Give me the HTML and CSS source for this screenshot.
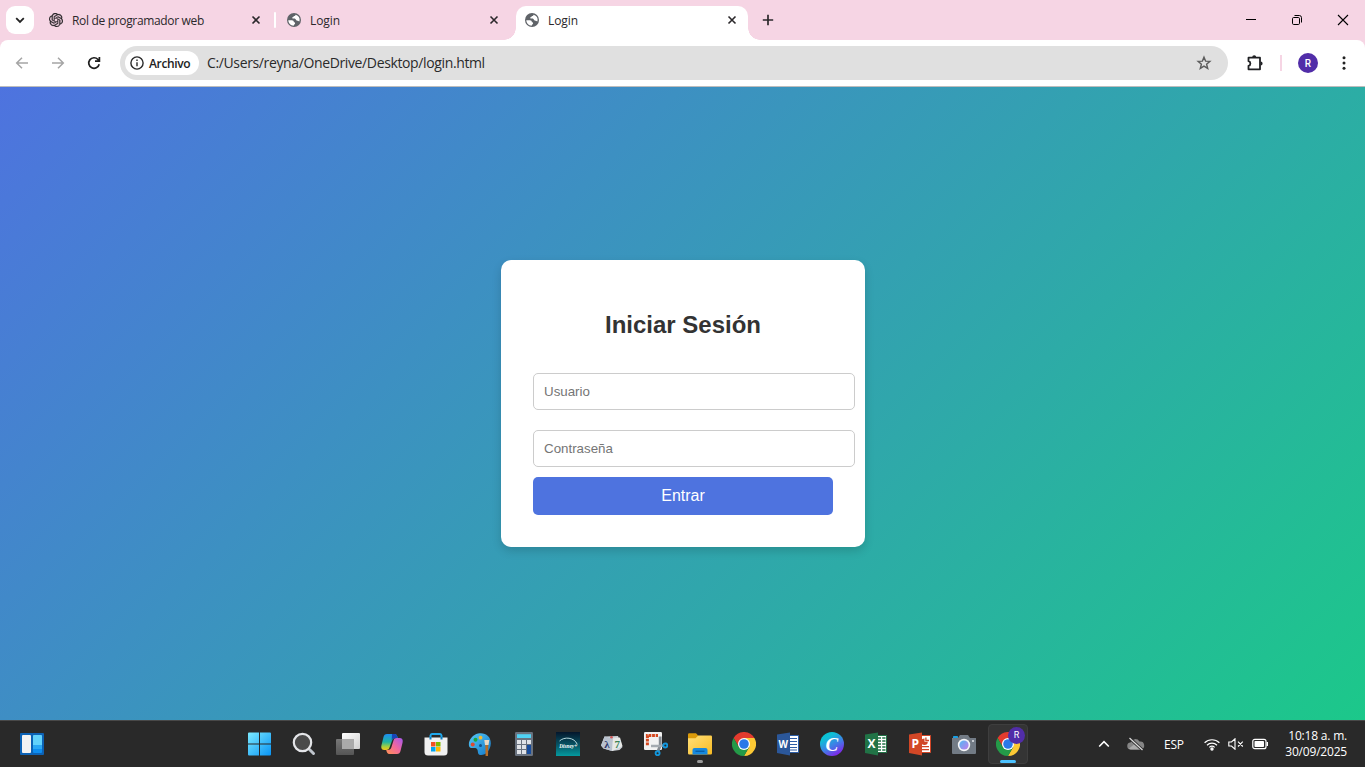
FILE: index.html
```html
<!DOCTYPE html>
<html lang="es">
<head>
<meta charset="utf-8">
<title>Login</title>
<link rel="stylesheet" href="styles.css">
</head>
<body>
<svg class="defs" width="0" height="0" aria-hidden="true">
  <defs>
    <symbol id="globe" viewBox="0 0 14 14">
      <circle cx="7" cy="7" r="7" fill="#5f6368"/>
      <path d="M1.3 7.3 4.8 7.3C6.3 7.3 6.9 8.1 6.9 9.2 8 9.2 8.3 9.9 8 10.8 7.7 11.6 6.8 11.5 6.7 12.8 3.7 12.6 1.4 10.3 1.3 7.3ZM8.6 1.7C8.4 2.7 7.7 3 6.8 2.9 6.7 3.7 6.2 4.1 5.3 4.2 5.1 5 5.4 5.6 6.4 5.5 8.2 5.4 8.9 6 9 7.1 9.8 7.8 11.2 7.8 12.3 8.6 13.4 5.4 11.7 2.5 8.6 1.7Z" fill="#fff"/>
    </symbol>
    <symbol id="close" viewBox="0 0 10 10"><path d="M1.5 1.5 8.5 8.5M8.5 1.5 1.5 8.5" stroke="#2b282b" stroke-width="1.6"/></symbol>
    <symbol id="chrome" viewBox="0 0 24 24">
      <path d="M1.6 6A12 12 0 0 1 22.4 6H12L6.8 15Z" fill="#e33b2e"/>
      <path d="M22.4 6A12 12 0 0 1 12 24L17.2 15 12 6Z" fill="#fcc934"/>
      <path d="M12 24A12 12 0 0 1 1.6 6L6.8 15H17.2Z" fill="#249a48"/>
      <circle cx="12" cy="12" r="6" fill="#fff"/><circle cx="12" cy="12" r="4.8" fill="#2b78e8"/>
    </symbol>
    <linearGradient id="gWin" x1="0" y1="0" x2="1" y2="1"><stop stop-color="#7ceaff"/><stop offset="1" stop-color="#0894f5"/></linearGradient>
    <linearGradient id="gWhite" x1="0" y1="0" x2="1" y2="1"><stop stop-color="#fff"/><stop offset="1" stop-color="#cfcfcf"/></linearGradient>
    <linearGradient id="gGrey" x1="0" y1="0" x2="0" y2="1"><stop stop-color="#777"/><stop offset="1" stop-color="#555"/></linearGradient>
    <linearGradient id="gCopA" x1="0" y1="0" x2="0" y2="1"><stop stop-color="#1d8df2"/><stop offset=".5" stop-color="#20b4a0"/><stop offset=".8" stop-color="#a9cf3b"/><stop offset="1" stop-color="#f5c518"/></linearGradient>
    <linearGradient id="gCopB" x1="1" y1="0" x2="0" y2="1"><stop stop-color="#a558f0"/><stop offset=".5" stop-color="#f2689c"/><stop offset="1" stop-color="#ff9350"/></linearGradient>
    <linearGradient id="gPal" x1="0" y1="0" x2="1" y2="1"><stop stop-color="#56c8f5"/><stop offset="1" stop-color="#1279cb"/></linearGradient>
    <linearGradient id="gDis" x1="0" y1="0" x2="0" y2="1"><stop stop-color="#04162c"/><stop offset=".55" stop-color="#075666"/><stop offset="1" stop-color="#049a9f"/></linearGradient>
    <linearGradient id="gFold" x1="0" y1="0" x2="1" y2="1"><stop stop-color="#ffe07a"/><stop offset="1" stop-color="#f8bb23"/></linearGradient>
    <linearGradient id="gCan" x1="0" y1="0" x2=".6" y2="1"><stop stop-color="#00c4cc"/><stop offset=".3" stop-color="#0fbfd6"/><stop offset=".65" stop-color="#3f7fe6"/><stop offset="1" stop-color="#7d2ae8"/></linearGradient>
    <linearGradient id="gLens" x1="0" y1="0" x2="1" y2="1"><stop stop-color="#4fb9f3"/><stop offset="1" stop-color="#c67bec"/></linearGradient>
  </defs>
</svg>

<header class="tabstrip">
  <button class="tab-search" aria-label="Buscar pestañas"><svg width="10" height="10" viewBox="0 0 10 10"><path d="M1.2 3.2 5 6.9 8.800 3.2" fill="none" stroke="#222" stroke-width="1.8"/></svg></button>
  <div class="tab tab-first">
    <svg width="14" height="14" viewBox="0 0 24 24"><path fill="#2b282b" stroke="#2b282b" stroke-width=".5" d="M22.2819 9.8211a5.9847 5.9847 0 0 0-.5157-4.9108 6.0462 6.0462 0 0 0-6.5098-2.9A6.0651 6.0651 0 0 0 4.9807 4.1818a5.9847 5.9847 0 0 0-3.9977 2.9 6.0462 6.0462 0 0 0 .7427 7.0966 5.98 5.98 0 0 0 .511 4.9107 6.051 6.051 0 0 0 6.5146 2.9001A5.9847 5.9847 0 0 0 13.2599 24a6.0557 6.0557 0 0 0 5.7718-4.2058 5.9894 5.9894 0 0 0 3.9977-2.9001 6.0557 6.0557 0 0 0-.7475-7.0729zm-9.022 12.6081a4.4755 4.4755 0 0 1-2.8764-1.0408l.1419-.0804 4.7783-2.7582a.7948.7948 0 0 0 .3927-.6813v-6.7369l2.02 1.1686a.071.071 0 0 1 .038.052v5.5826a4.504 4.504 0 0 1-4.4945 4.4944zm-9.6607-4.1254a4.4708 4.4708 0 0 1-.5346-3.0137l.142.0852 4.783 2.7582a.7712.7712 0 0 0 .7806 0l5.8428-3.3685v2.3324a.0804.0804 0 0 1-.0332.0615L9.74 19.9502a4.4992 4.4992 0 0 1-6.1408-1.6464zM2.3408 7.8956a4.485 4.485 0 0 1 2.3655-1.9728V11.6a.7664.7664 0 0 0 .3879.6765l5.8144 3.3543-2.0201 1.1685a.0757.0757 0 0 1-.071 0l-4.8303-2.7865A4.504 4.504 0 0 1 2.3408 7.872zm16.5963 3.8558L13.1038 8.364 15.1192 7.2a.0757.0757 0 0 1 .071 0l4.8303 2.7913a4.4944 4.4944 0 0 1-.6765 8.1042v-5.6772a.79.79 0 0 0-.407-.667zm2.0107-3.0231l-.142-.0852-4.7735-2.7818a.7759.7759 0 0 0-.7854 0L9.409 9.2297V6.8974a.0662.0662 0 0 1 .0284-.0615l4.8303-2.7866a4.4992 4.4992 0 0 1 6.6802 4.66zM8.3065 12.863l-2.02-1.1638a.0804.0804 0 0 1-.038-.0567V6.0742a4.4992 4.4992 0 0 1 7.3757-3.4537l-.142.0805L8.704 5.459a.7948.7948 0 0 0-.3927.6813zm1.0976-2.3654l2.602-1.4998 2.6069 1.4998v2.9994l-2.5974 1.4997-2.6067-1.4997Z"/></svg>
    <span class="tab-title">Rol de programador web</span>
    <svg class="tab-close" width="10" height="10"><use href="#close"/></svg>
  </div>
  <i class="tab-divider"></i>
  <div class="tab">
    <svg width="14" height="14"><use href="#globe"/></svg>
    <span class="tab-title">Login</span>
    <svg class="tab-close" width="10" height="10"><use href="#close"/></svg>
  </div>
  <div class="tab tab-active">
    <svg width="14" height="14"><use href="#globe"/></svg>
    <span class="tab-title">Login</span>
    <svg class="tab-close" width="10" height="10"><use href="#close"/></svg>
  </div>
  <svg class="new-tab" width="12" height="12" viewBox="0 0 12 12"><path d="M6 .8V11.2M.8 6H11.2" stroke="#2b282b" stroke-width="1.7"/></svg>
  <div class="window-controls">
    <svg width="12" height="12" viewBox="0 0 12 12"><path d="M1 5.5H11" stroke="#000"/></svg>
    <svg width="12" height="12" viewBox="0 0 12 12" fill="none" stroke="#000"><rect x="1.5" y="3.5" width="7" height="7" rx="1.2"/><path d="M3.5 1.5H8.3A2.2 2.2 0 0 1 10.5 3.7V8.5"/></svg>
    <svg width="12" height="12" viewBox="0 0 12 12"><path d="M1 1 11 11M11 1 1 11" stroke="#000" stroke-width="1.1"/></svg>
  </div>
</header>

<div class="toolbar-back">
<nav class="toolbar">
  <div class="nav-buttons">
    <svg width="14" height="14" viewBox="0 0 14 14" fill="none" stroke="#a5a5a5" stroke-width="1.5"><path d="M13 7H1.8M7 1.7 1.7 7 7 12.3"/></svg>
    <svg width="14" height="14" viewBox="0 0 14 14" fill="none" stroke="#a5a5a5" stroke-width="1.5"><path d="M1 7H12.2M7 1.7 12.3 7 7 12.3"/></svg>
    <svg width="14" height="14" viewBox="0 0 14 14" fill="none" stroke="#1f1f1f" stroke-width="1.7"><path d="M12.2 8.3A5.3 5.3 0 1 1 11 3.5L12 4.6M12.4 1V5.2H8"/></svg>
  </div>
  <div class="omnibox">
    <div class="chip">
      <svg width="14" height="14" viewBox="0 0 14 14"><circle cx="7" cy="7" r="6.1" fill="none" stroke="#2a2a2a" stroke-width="1.4"/><path d="M7 6.2V10.3M7 3.4V5" stroke="#2a2a2a" stroke-width="1.4"/></svg>
      <span>Archivo</span>
    </div>
    <span class="url">C:/Users/reyna/OneDrive/Desktop/login.html</span>
    <svg class="star" width="16" height="16" viewBox="0 0 16 16"><path d="M8 2.2 9.6 6.1 13.9 6.4 10.6 9.2 11.7 13.4 8 11.1 4.3 13.4 5.4 9.2 2.1 6.4 6.4 6.100Z" fill="none" stroke="#5c5c5c" stroke-width="1.4"/></svg>
  </div>
  <svg class="puzzle" width="18" height="18" viewBox="0 0 18 18"><path d="M2.500 3.700H14V15.300H2.500V11.800C5 11.300 5 7.700 2.500 7.200Z" fill="none" stroke="#202124" stroke-width="1.800" stroke-linejoin="round"/><path d="M6.200 3.200a2 2 0 0 1 4 0ZM14.600 7.500a2 2 0 0 1 0 4Z" fill="#202124"/></svg>
  <i class="toolbar-divider"></i>
  <span class="avatar">R</span>
  <svg class="menu" width="4" height="16" viewBox="0 0 4 16" fill="#222"><circle cx="2" cy="2.700" r="1.500"/><circle cx="2" cy="8" r="1.500"/><circle cx="2" cy="13.300" r="1.500"/></svg>
</nav>
</div>

<main class="page">
  <form class="login">
    <h2>Iniciar Sesión</h2>
    <input type="text" placeholder="Usuario">
    <input type="password" placeholder="Contraseña">
    <button type="button">Entrar</button>
  </form>
</main>

<footer class="taskbar">
  <div class="widgets"><svg width="24" height="22" viewBox="0 0 24 22"><rect width="24" height="22" rx="1" fill="#0c62b5"/><rect x="2" y="2" width="9" height="18" rx="1" fill="#f3f3f3"/><rect x="13" y="2" width="9" height="18" rx="1" fill="#0d8df0"/><path d="M13 12H22V3a1 1 0 0 0-1-1H14a1 1 0 0 0-1 1Z" fill="#62d2fb"/><path d="M13 12H22V16H13Z" fill="#2aa8f5"/></svg></div>
  <div class="apps">
    <span class="app"><svg viewBox="0 0 24 24"><path fill="url(#gWin)" d="M0 1.500a1 1 0 0 1 1-1H11V11.500H0ZM12 .5H22a1 1 0 0 1 1 1V11.500H12ZM0 12.500H11V23.500H1a1 1 0 0 1-1-1ZM12 12.500H23V22.500a1 1 0 0 1-1 1H12Z"/></svg></span>
    <span class="app"><svg viewBox="0 0 24 24"><path d="M17.500 17.500 21.500 21.500" stroke="#bfc5cc" stroke-width="3" stroke-linecap="round"/><circle cx="10.500" cy="10.500" r="8.700" fill="#4a4a4a" stroke="#e4e5e8" stroke-width="2.200"/></svg></span>
    <span class="app"><svg viewBox="0 0 24 24"><rect y="7" width="18" height="16" rx="1" fill="url(#gGrey)"/><rect x="6" y="1" width="18" height="16" rx="1" fill="url(#gWhite)"/><path d="M6 7H18V17H6Z" fill="#aaa"/></svg></span>
    <span class="app"><svg viewBox="0 0 24 24"><path d="M7 2H14.500C16.800 2 17.200 4 17.800 6H15C13.300 6 12.600 7 12.100 8.500L9.500 15.500C8.900 17.300 8 18 6.300 18H4.500C1.700 18 .8 16 1.400 13.500L3.500 5C4 3 5 2 7 2Z" fill="url(#gCopA)"/><path d="M12 2H14.500C16.800 2 17.200 4 17.800 6.300H14.300C12.500 6.300 12.300 7.500 11.700 8.500Z" fill="#1744b8"/><path d="M17 22H9.500C7.200 22 6.800 20 6.200 18H8C10 18 10.800 17 11.300 15.500L13.500 8.500C14.100 6.700 15 6 16.700 6H19.500C22.300 6 23.200 8 22.600 10.500L20.500 19C20 21 19 22 17 22Z" fill="url(#gCopB)"/></svg></span>
    <span class="app"><svg viewBox="0 0 24 24"><path d="M6.500 7V3.500A1.700 1.700 0 0 1 8 2H16A1.700 1.700 0 0 1 17.500 3.500V7" fill="none" stroke="#20a8ec" stroke-width="2"/><path d="M.5 5.500H23.500V20a3.500 3.500 0 0 1-3.500 3.500H4A3.500 3.500 0 0 1 .5 20Z" fill="#f1f1f1"/><path d="M5.500 5H7.500V7.500H5.500ZM16.500 5H18.500V7.500H16.500Z" fill="#0d7dc0"/><path fill="#f25022" d="M7 10h4.500v4.500H7Z"/><path fill="#7fba00" d="M12 10H16.500v4.500H12Z"/><path fill="#00a4ef" d="M7 15h4.500V19.500H7Z"/><path fill="#ffb900" d="M12 15H16.500V19.500H12Z"/></svg></span>
    <span class="app"><svg viewBox="0 0 24 24"><path d="M10 1.500C17 0 23 4 22.800 11.500 22.500 18.500 17.500 23.500 12.500 23 8.500 22.500 11 18.500 8.500 16.500 6.300 15 2.500 17.500 1.200 14.500-.5 9 4.500 2.800 10 1.500Z" fill="url(#gPal)"/><circle cx="12.500" cy="5.700" r="1.900" fill="#f3ba30"/><circle cx="7.500" cy="7.700" r="2" fill="#1aa640"/><circle cx="4.700" cy="12.500" r="2" fill="#dc4a31"/><circle cx="12.500" cy="13.500" r="1.500" fill="#154f88"/><path d="M17.300 12.500H20.300L20 24H17.600Z" fill="#b76e29"/><path d="M16.300 8H21.300L20.500 13H17Z" fill="#ead9c4"/></svg></span>
    <span class="app"><svg viewBox="0 0 24 24"><rect x="3" y="0" width="18" height="24" rx="1.200" fill="#69727f"/><path d="M5 2.200H19V6H5Z" fill="#50d2f5"/><path d="M5 8h4v4H5ZM10 8h4v4H10ZM15 8h4v4h-4ZM5 13h4v4H5ZM10 13h4v4H10ZM5 18h4v4H5ZM10 18h4v4H10Z" fill="#dfe2e7"/><path d="M15 13h4v9h-4Z" fill="#174c9c"/></svg></span>
    <span class="app"><svg viewBox="0 0 24 24"><rect width="24" height="24" fill="url(#gDis)"/><path d="M3.500 9C8 4.500 18.500 5 21.300 12.500" fill="none" stroke="#c9e9ee" stroke-width=".9"/><text x="3.200" y="16.300" class="disney" textLength="18" lengthAdjust="spacingAndGlyphs">Disney+</text></svg></span>
    <span class="app"><svg viewBox="0 0 24 24"><path d="M4.500 4.500 18 4 22.500 15 19.500 18 12 19 3.500 16.500 1 13.500Z" fill="#cfd4da"/><path d="M4.500 4.500 13 6.500 12 19 3.500 16.500 1 13.500Z" fill="#b9c2ce"/><path d="M13 6.500 20 5.500 22.500 14 12 19Z" fill="#e7e9e7"/><circle cx="11.500" cy="5.200" r="1.300" fill="#cf5757"/><text x="4.200" y="15.800" class="cube lambda">λ</text><text x="14.500" y="15.500" class="cube seven">7</text></svg></span>
    <span class="app"><svg viewBox="0 0 24 24"><rect width="18" height="18" rx="1.200" fill="#f2f2f2"/><path d="M3.400 13.200V3.500H14" fill="none" stroke="#d5481f" stroke-width="3" stroke-dasharray="2.800 .8"/><path d="M16.200 4.500V13.500L13.700 20" fill="none" stroke="#858b92" stroke-width="2.800"/><path d="M7 14H15.500L20 13.500" fill="none" stroke="#a4aab0" stroke-width="2.600"/><circle cx="13.600" cy="21.200" r="2" fill="none" stroke="#1296dd" stroke-width="1.900"/><circle cx="21.300" cy="13.500" r="2" fill="none" stroke="#1296dd" stroke-width="1.900"/></svg></span>
    <span class="app app-open"><svg viewBox="0 0 24 24"><path d="M0 2.500a1.200 1.200 0 0 1 1.200-1.200H8L10.500 4 9 8H0Z" fill="#dc9b0a"/><path d="M0 6.200H7.500L10.300 3.500H22.800A1.200 1.200 0 0 1 24 4.700V21.300a1.200 1.200 0 0 1-1.200 1.200H1.200A1.200 1.200 0 0 1 0 21.300Z" fill="url(#gFold)"/><path d="M4.500 22.500V18a2 2 0 0 1 2-2H17.500a2 2 0 0 1 2 2V22.500Z" fill="#1688dd"/><path d="M7.500 19.300H16.500" stroke="#075fa8" stroke-width="1.400"/></svg></span>
    <span class="app"><svg><use href="#chrome"/></svg></span>
    <span class="app"><svg viewBox="0 0 24 24"><path d="M12 3.500H22.500V20.500H12Z" fill="#fff" stroke="#2d5da6" stroke-width="1"/><path d="M13 6.500H21M13 9.500H21M13 12.500H21M13 15.500H21M13 18H21" stroke="#2d5da6" stroke-width="1.100"/><path d="M1 2.500 14 .5V23.500L1 21Z" fill="#2b579a"/><text x="2.500" y="16" class="office" textLength="9.500" lengthAdjust="spacingAndGlyphs">W</text></svg></span>
    <span class="app"><svg viewBox="0 0 24 24"><circle cx="12" cy="12" r="12" fill="url(#gCan)"/><text x="11.800" y="18.500" class="canva">C</text></svg></span>
    <span class="app"><svg viewBox="0 0 24 24"><path d="M12 3.500H22.500V20.500H12Z" fill="#fff" stroke="#217346" stroke-width="1"/><path d="M13 6H17M18.200 6H21.500M13 9H17M18.200 9H21.500M13 12H17M18.200 12H21.500M13 15H17M18.200 15H21.500M13 18H17M18.200 18H21.500" stroke="#217346" stroke-width="1.400"/><path d="M1 2.500 14 .5V23.500L1 21Z" fill="#217346"/><text x="3.400" y="16.400" class="office office-lg">X</text></svg></span>
    <span class="app"><svg viewBox="0 0 24 24"><path d="M12 3.500H22.500V20.500H12Z" fill="#fff" stroke="#d04526" stroke-width="1"/><path d="M16.500 6.500A3.300 3.300 0 1 0 19.800 9.800H16.500Z" fill="#d04526"/><path d="M17.900 5.500V8.500H21M14 14.700H21M14 17.700H21" fill="none" stroke="#d04526" stroke-width="1.300"/><path d="M1 2.500 14 .5V23.500L1 21Z" fill="#d24726"/><text x="3.600" y="16.400" class="office office-lg">P</text></svg></span>
    <span class="app"><svg viewBox="0 0 24 24"><path d="M1.500 6V4.500H5.500V6" fill="#1aa0e4" stroke="#1aa0e4"/><path d="M0 6H6L8 3H16L18 6H24V21a1 1 0 0 1-1 1H1a1 1 0 0 1-1-1Z" fill="#727b85"/><circle cx="12" cy="13" r="6.200" fill="#f5f6f8"/><circle cx="12" cy="13" r="4.600" fill="url(#gLens)"/><path d="M20 8h2v2h-2Z" fill="#c8cdd2"/></svg></span>
    <span class="app app-active"><svg><use href="#chrome"/></svg><b class="app-badge">R</b></span>
  </div>
  <div class="tray">
    <svg class="tray-up" width="12" height="12" viewBox="0 0 12 12"><path d="M1.200 8.500 6 3.700 10.800 8.500" fill="none" stroke="#fff" stroke-width="1.600"/></svg>
    <svg class="tray-cloud" width="18" height="14" viewBox="0 0 18 14"><path d="M4 12.500A3.500 3.500 0 0 1 3.500 5.500 5 5 0 0 1 12.500 4.500 4 4 0 0 1 13.800 12.500Z" fill="#858585"/><path d="M2 11.500 7 7.500 15.500 12Q15 12.500 13.800 12.500H4Q2.500 12.500 2 11.500Z" fill="#ababab"/><path d="M2.500 1 15.500 13" stroke="#292929" stroke-width="3"/><path d="M2.500 1 15.500 13" stroke="#ddd" stroke-width="1.200"/></svg>
    <span class="lang">ESP</span>
    <div class="status">
      <svg width="16" height="13" viewBox="0 0 16 13" fill="none" stroke="#fff" stroke-width="1.200"><path d="M.6 4.800A10.500 10.500 0 0 1 15.400 4.800M3 7.200A7.200 7.200 0 0 1 13 7.200M5.300 9.400A4 4 0 0 1 10.700 9.400"/><circle cx="8" cy="11" r="1.100" fill="#fff"/></svg>
      <svg width="16" height="12" viewBox="0 0 16 12" fill="none" stroke="#fff" stroke-width="1.100"><path d="M.8 4V8H3.500L7 11.200V.8L3.500 4ZM10 3.700 14.800 8.500M14.800 3.700 10 8.500"/></svg>
      <svg width="17" height="12" viewBox="0 0 17 12"><rect x=".8" y="1.300" width="13.200" height="9.400" rx="2" fill="none" stroke="#fff" stroke-width="1.200"/><rect x="2.500" y="3" width="9.500" height="6" rx=".8" fill="#fff"/><path d="M15.300 4V8" stroke="#fff" stroke-width="1.400"/></svg>
    </div>
    <div class="clock"><span class="time">10:18 a. m.</span><span class="date">30/09/2025</span></div>
  </div>
</footer>
</body>
</html>
```
FILE: styles.css
```css
* { box-sizing: border-box; }
body {
  margin: 0;
  width: 1365px;
  height: 767px;
  overflow: hidden;
  display: flex;
  flex-direction: column;
  font-family: "Open Sans", "Noto Sans", sans-serif;
}
svg { display: block; flex: none; }
.defs { position: absolute; }

/* Browser tabs */
.tabstrip {
  height: 40px;
  flex: none;
  display: flex;
  align-items: center;
  background: #f6d5e4;
  padding-left: 6px;
}
.tab-search {
  width: 28px;
  height: 28px;
  border: 0;
  padding: 0;
  border-radius: 9px;
  background: #fff;
  display: grid;
  place-items: center;
}
.tab {
  display: flex;
  align-items: center;
  gap: 9px;
  padding-bottom: 6px;
  height: 34px;
  align-self: flex-end;
}
.tab-first { width: 240px; padding-left: 15px; padding-right: 13px; }
.tab-divider { width: 2px; height: 16px; background: #fff; border-radius: 1px; }
.tab-divider + .tab { width: 240px; padding-left: 11px; padding-right: 17px; }
.tab-title {
  flex: 1;
  padding-top: 2px;
  font-size: 12px;
  color: #2b282b;
  letter-spacing: -0.33px;
  white-space: nowrap;
  line-height: 16px;
}
.tab-active {
  position: relative;
  width: 232px;
  padding: 0 11px 6px 9px;
  background: #fff;
  border-radius: 10px 10px 0 0;
}
.tab:not(.tab-first) .tab-title { letter-spacing: -0.1px; }
.tab-active::before,
.tab-active::after {
  content: "";
  position: absolute;
  bottom: 0;
  width: 12px;
  height: 12px;
}
.tab-active::before { left: -12px; background: radial-gradient(circle at 0 0, #f6d5e4 11.5px, #fff 12px); }
.tab-active::after { right: -12px; background: radial-gradient(circle at 100% 0, #f6d5e4 11.5px, #fff 12px); }
.new-tab { margin-left: 14px; }
.window-controls { margin: 0 16px 0 auto; display: flex; gap: 34px; }

/* Address bar */
.toolbar-back { background: #f6d5e4; flex: none; }
.toolbar {
  height: 47px;
  display: flex;
  align-items: center;
  background: #fff;
  border-bottom: 1px solid #bdbdbd;
  border-radius: 8px 8px 0 0;
  padding-left: 15px;
}
.nav-buttons { display: flex; gap: 22px; width: 105px; }
.omnibox {
  width: 1108px;
  height: 34px;
  border-radius: 17px;
  background: #e0e0e0;
  display: flex;
  align-items: center;
  padding: 0 16px 0 5px;
}
.chip {
  width: 74px;
  height: 24px;
  border-radius: 12px;
  background: #fff;
  display: flex;
  align-items: center;
  gap: 5px;
  padding-left: 5px;
  font-size: 12px;
  font-weight: 600;
  letter-spacing: -0.35px;
  color: #222;
}
.url {
  margin-left: 8px;
  padding-bottom: 1px;
  font-size: 14px;
  letter-spacing: -0.37px;
  color: #2a2a2a;
  white-space: nowrap;
}
.star { margin-left: auto; }
.puzzle { margin-left: 18px; }
.toolbar-divider { width: 2px; height: 16px; background: #f6d5e4; margin-left: 16px; }
.avatar {
  width: 20px;
  height: 20px;
  border-radius: 50%;
  background: #512da8;
  color: #fff;
  font: 500 10px/21px Roboto, sans-serif;
  text-align: center;
  margin-left: 16px;
}
.menu { margin-left: 24px; }

/* Login page */
.page {
  height: 633px;
  flex: none;
  display: flex;
  justify-content: center;
  align-items: center;
  background: linear-gradient(135deg, #4e73df, #1cc88a);
  font-family: Arial, "Liberation Sans", sans-serif;
}
.login {
  width: 364px;
  padding: 32px;
  margin-left: 1px;
  border-radius: 10px;
  background: #fff;
  box-shadow: 0 4px 10px rgba(0, 0, 0, 0.15);
  text-align: center;
}
.login h2 { margin: 19px 0 35px; font-size: 24px; line-height: 27px; color: #333; }
.login input {
  display: block;
  width: 322px;
  height: 37px;
  margin: 0 0 20px;
  padding: 10px;
  border: 1px solid #ccc;
  border-radius: 5px;
  font: 13.333px Arial, "Liberation Sans", sans-serif;
}
.login input::placeholder { color: #757575; }
.login button {
  display: block;
  width: 300px;
  height: 38px;
  margin-top: -10px;
  border: 0;
  border-radius: 5px;
  background: #4e73df;
  color: #fff;
  font: 16px Arial, "Liberation Sans", sans-serif;
}

/* Taskbar */
.taskbar {
  height: 47px;
  flex: none;
  display: flex;
  align-items: center;
  background: #292929;
  border-top: 1px solid #484848;
  color: #fff;
}
.widgets { width: 238px; padding-left: 20px; }
.apps { display: flex; }
.app {
  position: relative;
  width: 44px;
  height: 46px;
  display: grid;
  place-items: center;
}
.app svg { width: 24px; height: 24px; }
.app-open::after {
  content: "";
  position: absolute;
  left: 19px;
  bottom: 4px;
  width: 6px;
  height: 3px;
  border-radius: 2px;
  background: #9b9b9b;
}
.app-active::before {
  content: "";
  position: absolute;
  inset: 3px 2px;
  border-radius: 4px;
  background: #343434;
  border: 1px solid #3e3e3e;
}
.app-active svg { position: relative; }
.app-active::after {
  content: "";
  position: absolute;
  left: 14px;
  bottom: 4px;
  width: 16px;
  height: 3px;
  border-radius: 2px;
  background: #4cc2ff;
}
.app-badge {
  position: absolute;
  left: 22px;
  top: 6px;
  width: 17px;
  height: 17px;
  border-radius: 50%;
  background: #512da8;
  font: 9px/17px Roboto, sans-serif;
  text-align: center;
}
.office { font: bold 10px "Open Sans", sans-serif; fill: #fff; }
.office-lg { font-size: 12px; }
.canva { font: italic bold 19px "Liberation Serif", serif; fill: #fff; text-anchor: middle; }
.disney { font: italic bold 6.5px "Liberation Serif", serif; fill: #fff; }
.cube { font: bold 11px "Liberation Serif", serif; }
.lambda { fill: #29356b; }
.seven { fill: #3b8455; }
.tray { margin-left: auto; display: flex; align-items: center; padding-right: 18px; }
.tray-cloud { margin-left: 17px; }
.lang { margin-left: 19px; width: 40px; font-size: 12px; letter-spacing: -0.25px; }
.status { display: flex; align-items: center; gap: 8px; width: 64px; }
.clock {
  width: 79px;
  display: flex;
  flex-direction: column;
  align-items: flex-end;
  font-size: 12px;
  line-height: 16px;
  letter-spacing: -0.2px;
  white-space: nowrap;
}
```
